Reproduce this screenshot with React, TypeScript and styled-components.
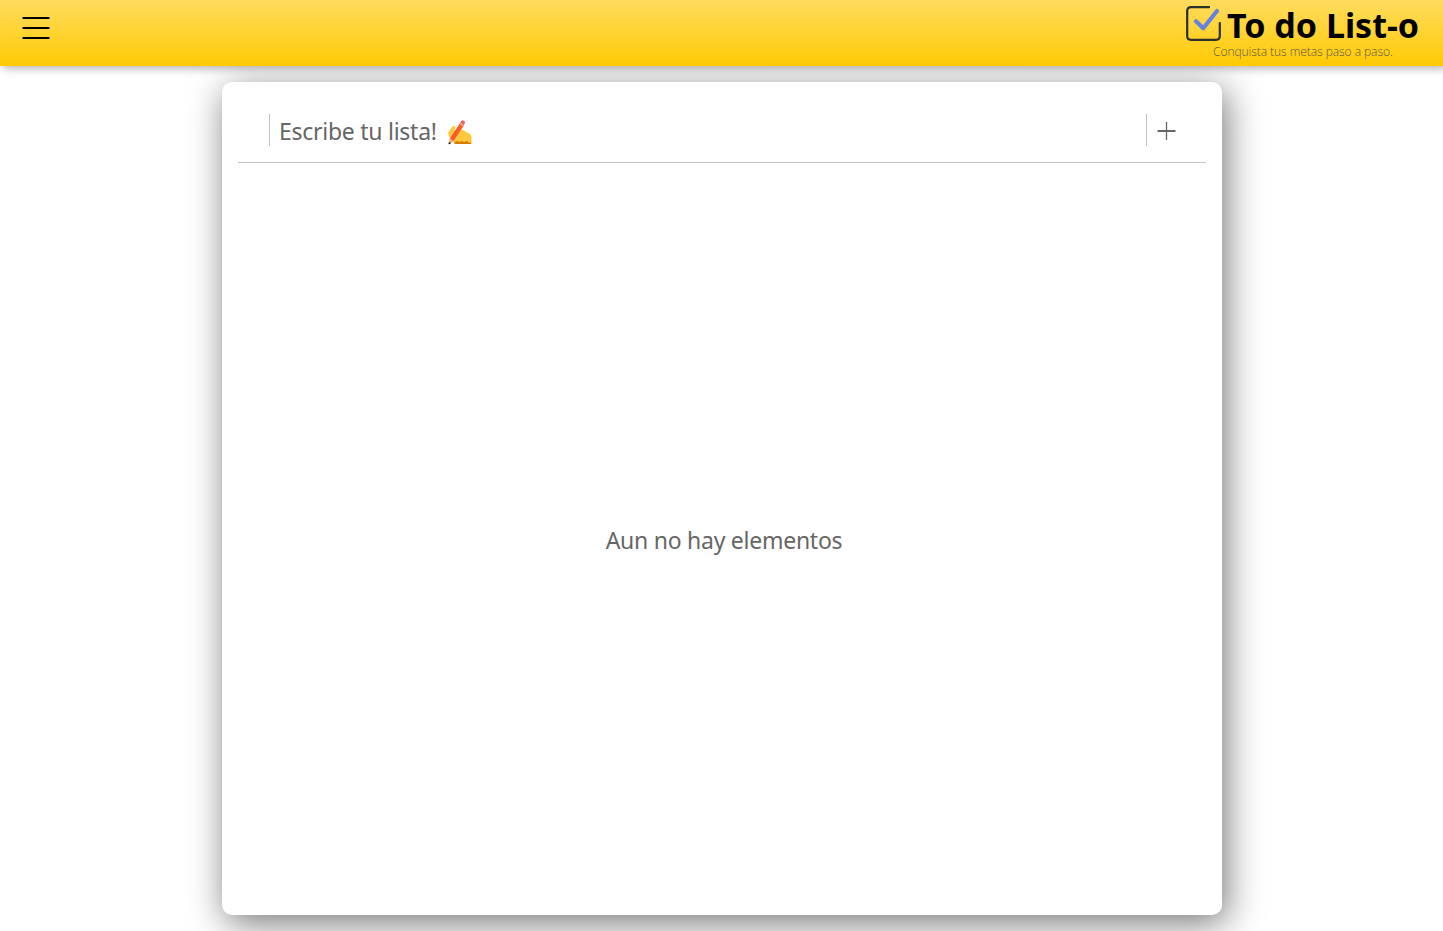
import React from 'react';
import styled, { createGlobalStyle } from 'styled-components';

const GlobalStyle = createGlobalStyle`
  * { box-sizing: border-box; }
  body {
    margin: 0;
    background: #fff;
    overflow: hidden;
    font-family: "Segoe UI", "Noto Sans", "Open Sans", sans-serif;
  }
`;

const Page = styled.div`
  height: 931px;
  display: flex;
  flex-direction: column;
  align-items: center;
  overflow: hidden;
`;

const Header = styled.header`
  position: relative;
  z-index: 1;
  width: 100%;
  height: 66px;
  flex: none;
  display: flex;
  justify-content: space-between;
  align-items: flex-start;
  padding: 6px 25px 0 22px;
  background: linear-gradient(#ffdc5e, #ffca03);
  box-shadow: 3px 3px 8px rgba(0, 0, 0, 0.28);
`;

const MenuButton = styled.button`
  margin: 10px 0 0;
  padding: 0;
  border: 0;
  background: none;
  svg { display: block; }
`;

const Brand = styled.div`
  display: flex;
  flex-direction: column;
  width: 232px;
`;

const BrandRow = styled.div`
  display: flex;
  gap: 5px;
  height: 38px;
  svg { flex: none; }
`;

const Title = styled.h1`
  margin: 0;
  font-size: 34px;
  font-weight: 700;
  line-height: 38px;
  white-space: nowrap;
  color: #000;
`;

const Tagline = styled.p`
  margin: 0 0 0 27px;
  font-family: "Segoe UI", "Open Sans", sans-serif;
  font-size: 12px;
  font-weight: 300;
  line-height: 16px;
  letter-spacing: -0.05px;
  white-space: nowrap;
  color: #5c5650;
`;

const Card = styled.main`
  width: 1000px;
  height: 833px;
  flex: none;
  margin: 16px 0 0 1px;
  padding: 16px;
  display: flex;
  flex-direction: column;
  border-radius: 10px;
  background: #fff;
  box-shadow: 4px 8px 36px rgba(0, 0, 0, 0.54);
`;

const Form = styled.form`
  flex: none;
  height: 65px;
  display: flex;
  padding: 16px 24px 16px 31px;
  border-bottom: 1px solid #c4c4c4;
`;

const Entry = styled.div`
  flex: 1;
  display: flex;
  align-items: center;
  gap: 10px;
  padding-left: 9px;
  border-left: 1px solid #c4c4c4;
  border-right: 1px solid #c4c4c4;
  svg { margin-top: 4px; }
`;

const Label = styled.span`
  font-size: 23px;
  line-height: 32px;
  letter-spacing: -0.26px;
  white-space: nowrap;
  color: #666;
`;

const Placeholder = styled(Label)`
  padding-top: 2px;
`;

const AddButton = styled.button`
  width: 35px;
  padding: 0 0 0 4px;
  border: 0;
  background: none;
  display: flex;
  align-items: center;
  justify-content: center;
`;

const Empty = styled.section`
  flex: 1;
  display: flex;
  align-items: center;
  justify-content: center;
  padding: 17px 0 0 4px;
`;

const MenuIcon = () => (
  <svg width="28" height="24" viewBox="0 0 28 24">
    <path d="M.5 2h27M.5 12h27M.5 22h27" stroke="#000" strokeWidth="2" />
  </svg>
);

const CheckIcon = () => (
  <svg width="36" height="36" viewBox="0 0 36 36" fill="none" strokeLinecap="round" strokeLinejoin="round">
    <path d="M23 1.200H5Q1.200 1.200 1.200 5v25q0 3.800 3.800 3.800h25q3.800 0 3.800-3.800V17" stroke="#2b302b" strokeWidth="2.2" />
    <path d="M10 15.200 17.200 22.200 31 5" stroke="#6483e0" strokeWidth="4.2" />
  </svg>
);

const WritingIcon = () => (
  <svg width="25" height="25" viewBox="0 0 25 25">
    <path d="M1 13 5 7q2-2 3.500-.5L7 11l5-3 11 6q1.500 1 1.500 3v7H12l-4-1Q2 19 1 13Z" fill="#ffc83d" />
    <path d="M7 23q1-2 4-2l2 1 2-1 2 1 3-1q1 2 4 1.500V24H8Z" fill="#d67d00" />
    <path d="M3 18.500 13 3l4 2.300L6.500 21 2 24Z" fill="#ff5b29" />
    <path d="M3 18.500 6.500 21 2 24Z" fill="#f3ad80" />
    <path d="m13.200 2.700 1-1.700q1-1.200 2.600-.2 1.700 1 1 2.400l-1 1.900Z" fill="#f45c61" />
    <path d="m12.500 3.500 4 2.400" stroke="#c9d0d8" strokeWidth="1" />
    <circle cx="2.500" cy="23.300" r="1" fill="#111" />
  </svg>
);

const PlusIcon = () => (
  <svg width="19" height="19" viewBox="0 0 19 19">
    <path d="M.5 10h18" stroke="#666" strokeWidth="2" />
    <path d="M9.500 1v18" stroke="#666" strokeWidth="1.300" />
  </svg>
);

export default function App() {
  return (
    <>
      <GlobalStyle />
      <Page>
        <Header>
          <MenuButton type="button" aria-label="Menu"><MenuIcon /></MenuButton>
          <Brand>
            <BrandRow>
              <CheckIcon />
              <Title>To do List-o</Title>
            </BrandRow>
            <Tagline>Conquista tus metas paso a paso.</Tagline>
          </Brand>
        </Header>
        <Card>
          <Form>
            <Entry>
              <Placeholder>Escribe tu lista!</Placeholder>
              <WritingIcon />
            </Entry>
            <AddButton type="button" aria-label="Agregar"><PlusIcon /></AddButton>
          </Form>
          <Empty><Label>Aun no hay elementos</Label></Empty>
        </Card>
      </Page>
    </>
  );
}
